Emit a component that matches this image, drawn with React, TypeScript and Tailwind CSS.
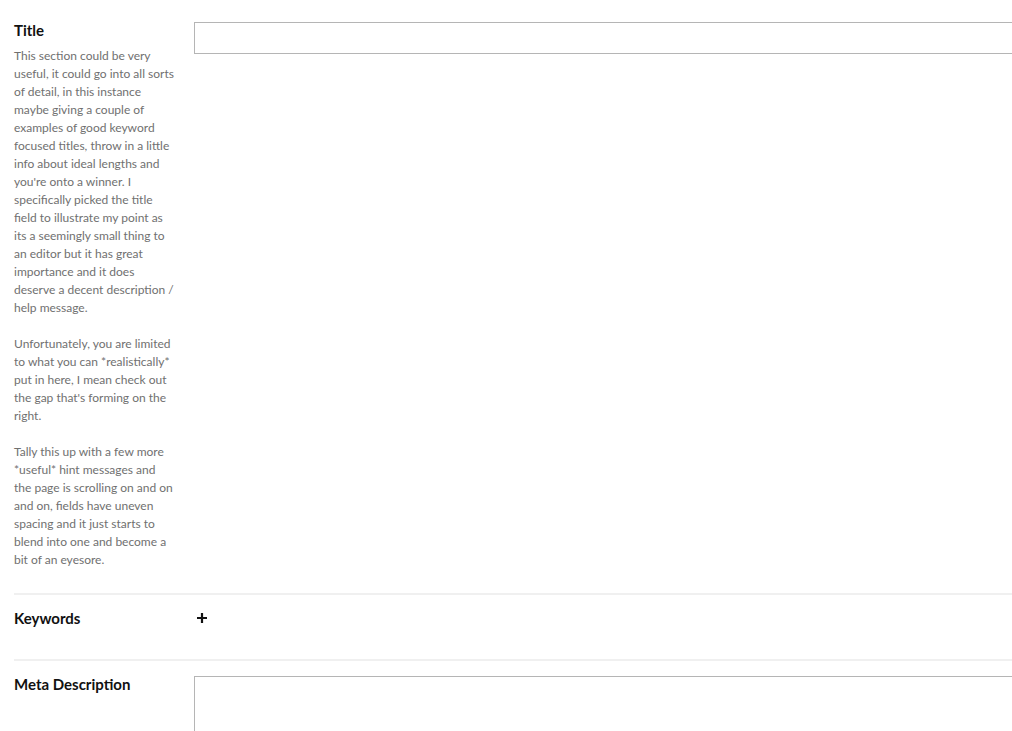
export default function App() {
  return (
    <div className="h-[731px] w-[1012px] overflow-hidden bg-white font-['Lato','Liberation_Sans',sans-serif]">
      <div className="w-[1100px] pl-[14px]">
        {/* title */}
        <section className="flex gap-[19px] border-b-2 border-[#f0f0f0] pt-[21px] pb-[24px]">
          <div className="w-[161px] shrink-0">
            <h3 className="text-[15px] font-bold leading-[18px] text-[#111]">Title</h3>
            <div className="mt-[8px] text-[12px] leading-[18px] text-[#707070]">
              <p>
                This section could be very useful, it could go into all sorts of detail, in this
                instance maybe giving a couple of examples of good keyword focused titles, throw
                in a little info about ideal lengths and you're onto a winner. I specifically
                picked the title field to illustrate my point as its a seemingly small thing to an
                editor but it has great importance and it does deserve a decent description / help
                message.
              </p>
              <p className="mt-[18px]">
                Unfortunately, you are limited to what you can *realistically* put in here, I mean
                check out the gap that's forming on the right.
              </p>
              <p className="mt-[18px]">
                Tally this up with a few more *useful* hint messages and the page is scrolling on
                and on and on, fields have uneven spacing and it just starts to blend into one and
                become a bit of an eyesore.
              </p>
            </div>
          </div>
          <input
            type="text"
            className="mt-[1px] h-[32px] flex-1 border border-[#b5b5b5] px-2 text-[14px] outline-none"
          />
        </section>

        {/* keywords */}
        <section className="flex h-[66px] gap-[19px] border-b-2 border-[#f0f0f0] pt-[14px]">
          <div className="w-[161px] shrink-0">
            <h3 className="text-[15px] font-bold leading-[18px] text-[#111]">Keywords</h3>
          </div>
          <button className="flex h-[18px] w-[16px] items-center justify-center">
            <svg width="10" height="10" viewBox="0 0 10 10">
              <path d="M5 0v10M0 5h10" stroke="#111" strokeWidth="2.2" />
            </svg>
          </button>
        </section>

        {/* meta description */}
        <section className="flex gap-[19px] pt-[15px]">
          <div className="w-[161px] shrink-0">
            <h3 className="text-[15px] font-bold leading-[16px] text-[#111]">Meta Description</h3>
          </div>
          <textarea className="h-[100px] flex-1 resize-none border border-[#b5b5b5] p-2 text-[14px] outline-none" />
        </section>
      </div>
    </div>
  );
}
